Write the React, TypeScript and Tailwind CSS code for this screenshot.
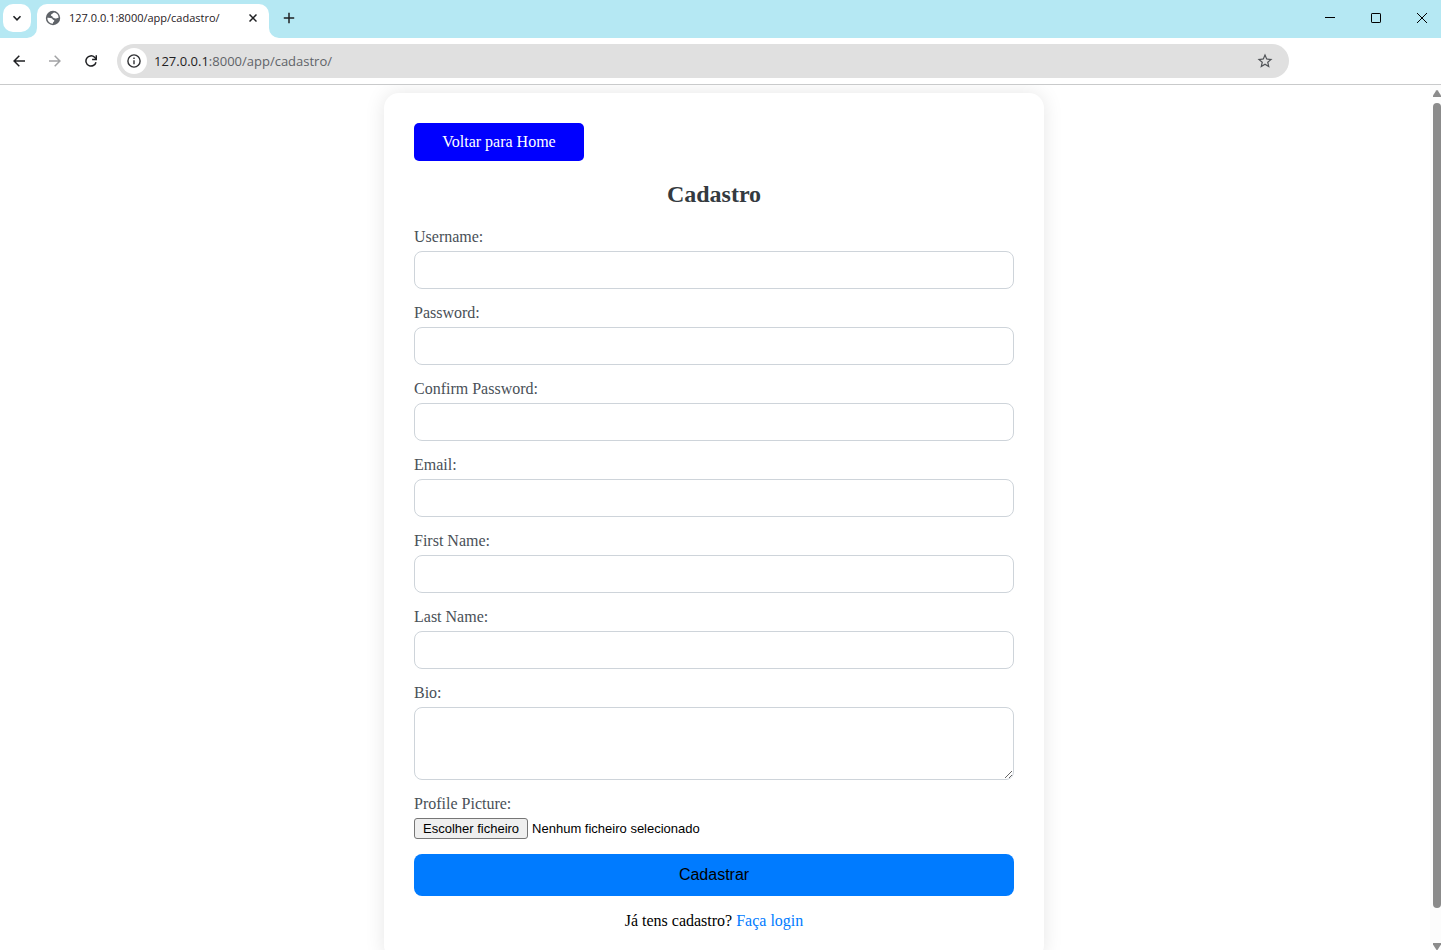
import { useRef, useState } from "react";
import { MdStarBorder } from "react-icons/md";

function TabFlare({ side }: { side: "left" | "right" }) {
  return (
    <svg
      aria-hidden="true"
      viewBox="0 0 10 10"
      className={
        side === "left"
          ? "absolute bottom-0 -left-2.5 h-2.5 w-2.5 text-white"
          : "absolute bottom-0 -right-2.5 h-2.5 w-2.5 text-white"
      }
      fill="currentColor"
    >
      {side === "left" ? <path d="M10 0v10H0A10 10 0 0 0 10 0Z" /> : <path d="M0 0v10h10A10 10 0 0 1 0 0Z" />}
    </svg>
  );
}

function GlobeIcon() {
  return (
    <svg aria-hidden="true" viewBox="0 0 16 16" className="size-4 shrink-0">
      <circle cx="8" cy="8" r="7.2" fill="#5f6368" />
      <path
        fill="#fff"
        d="M9.300 2.500c-1.300.2-1.500 1.400-2.700 1.700-.9.300-.9 1.500.1 1.700 1 .2.700 1.500 1.700 1.800 1 .3 1.200.9 2.300.9.900 0 1.200-.8 2.900-.8A5.700 5.700 0 0 0 9.300 2.500Z"
      />
      <path
        fill="#fff"
        d="M2.300 7.800c1.600-.2 3.200 0 4.300.5 1 .5 1 1.500 2.100 1.700.8.200.8 1.300.1 1.800-.8.500-.7.900-1 1.900A5.700 5.700 0 0 1 2.300 7.800Z"
      />
    </svg>
  );
}

function TabStrip() {
  return (
    <header className="flex h-[38px] shrink-0 items-end bg-[#b5e8f3]">
      <button
        type="button"
        aria-label="Search tabs"
        className="mb-1.5 ml-[3px] flex size-7 items-center justify-center rounded-[10px] bg-white text-[#1f2023]"
      >
        <svg viewBox="0 0 10 10" className="size-2.5" fill="none" stroke="currentColor" strokeWidth="1.6">
          <path d="M1.500 3.300 5 6.800l3.500-3.500" />
        </svg>
      </button>
      <div className="relative ml-1.5 flex h-[34px] w-[232px] items-center rounded-t-[10px] bg-white pr-2.5 pb-1.5 pl-2">
        <TabFlare side="left" />
        <GlobeIcon />
        <span className="ml-2 flex-1 text-[11px] leading-4 whitespace-nowrap text-[#1f2023]">
          127.0.0.1:8000/app/cadastro/
        </span>
        <button type="button" aria-label="Close tab" className="flex size-3 items-center justify-center text-[#1f2023]">
          <svg viewBox="0 0 8 8" className="size-2" stroke="currentColor" strokeWidth="1.5">
            <path d="m.5.5 7 7m0-7-7 7" />
          </svg>
        </button>
        <TabFlare side="right" />
      </div>
      <button
        type="button"
        aria-label="New tab"
        className="mb-1.5 ml-1.5 flex size-7 items-center justify-center text-[#1f2023]"
      >
        <svg viewBox="0 0 12 12" className="size-3" stroke="currentColor" strokeWidth="1.5">
          <path d="M6 .8v10.400M.8 6h10.400" />
        </svg>
      </button>
      <div className="ml-auto flex h-full items-center pb-0.5 text-black">
        <button type="button" aria-label="Minimize" className="flex w-[46px] justify-center">
          <svg viewBox="0 0 10 10" className="size-2.5" stroke="currentColor">
            <path d="M0 4.500h10" />
          </svg>
        </button>
        <button type="button" aria-label="Maximize" className="flex w-[46px] justify-center">
          <svg viewBox="0 0 10 10" className="size-2.5" fill="none" stroke="currentColor">
            <rect x=".5" y=".5" width="9" height="9" rx=".6" />
          </svg>
        </button>
        <button type="button" aria-label="Close" className="-mr-1 flex w-[46px] justify-center">
          <svg viewBox="0 0 10 10" className="size-2.5" stroke="currentColor">
            <path d="m0 0 10 10M10 0 0 10" />
          </svg>
        </button>
      </div>
    </header>
  );
}

function Toolbar() {
  return (
    <nav className="flex h-[47px] shrink-0 items-center border-b border-[#c9cacb] bg-white">
      <div className="flex w-[117px] shrink-0 pl-[3px]">
        <button type="button" aria-label="Back" className="flex w-8 justify-center text-[#1f2023]">
          <svg viewBox="0 0 12 12" className="size-3" fill="none" stroke="currentColor" strokeWidth="1.5">
            <path d="M12 6H1M6.300.8 1.100 6l5.200 5.200" />
          </svg>
        </button>
        <button type="button" aria-label="Forward" disabled className="ml-1 flex w-8 justify-center text-[#a2a3a5]">
          <svg viewBox="0 0 12 12" className="size-3" fill="none" stroke="currentColor" strokeWidth="1.5">
            <path d="M0 6h11M5.700.8 10.900 6l-5.200 5.200" />
          </svg>
        </button>
        <button type="button" aria-label="Reload" className="ml-1 flex w-8 justify-center text-[#1f2023]">
          <svg viewBox="0 0 12 12" className="size-3" fill="none" stroke="currentColor" strokeWidth="1.5">
            <path d="M11 7.200A5.100 5.100 0 1 1 9.600 2.300L11.200 4" />
            <path d="M11.300.2v4.200H7.100" />
          </svg>
        </button>
      </div>
      <div className="mr-[152px] flex h-[34px] flex-1 items-center rounded-full bg-[#e0e0e0] pr-[15px] pl-1">
        <button
          type="button"
          aria-label="Site information"
          className="flex size-[26px] shrink-0 items-center justify-center rounded-full bg-white text-[#303134]"
        >
          <svg viewBox="0 0 14 14" className="size-3.5" fill="none" stroke="currentColor" strokeWidth="1.4">
            <circle cx="7" cy="7" r="6.100" />
            <path d="M7 6.200v4M7 3.600v1.400" />
          </svg>
        </button>
        <div className="ml-[7px] flex-1 text-[13px] leading-5 text-[#5f6368]">
          <span className="text-[#1f2023]">127.0.0.1</span>:8000/app/cadastro/
        </div>
        <button type="button" aria-label="Bookmark this page" className="text-[#4f5256]">
          <MdStarBorder className="size-[18px]" />
        </button>
      </div>
    </nav>
  );
}

const fields = [
  { id: "username", label: "Username:", type: "text" },
  { id: "password", label: "Password:", type: "password" },
  { id: "confirm-password", label: "Confirm Password:", type: "password" },
  { id: "email", label: "Email:", type: "email" },
  { id: "first-name", label: "First Name:", type: "text" },
  { id: "last-name", label: "Last Name:", type: "text" },
];

const labelClass = "mb-[5px] block leading-[18px] text-[#495057]";
const boxClass = "block w-full rounded-lg border border-[#ced4da] bg-white px-2.5 outline-none focus:border-[#007bff]";

function SignupForm() {
  const fileInput = useRef<HTMLInputElement>(null);
  const [fileName, setFileName] = useState("");

  return (
    <section className="mx-auto mt-2 w-full max-w-[660px] rounded-[15px] bg-white p-[30px] text-[16px] shadow-[0_0_20px_rgba(0,0,0,0.1)]">
      <a
        href="/"
        className="flex h-[38px] w-[170px] items-center justify-center rounded-[5px] bg-[#0000ff] text-white"
      >
        Voltar para Home
      </a>
      <h2 className="my-5 text-center text-[24px] leading-[27px] font-bold text-[#343a40]">Cadastro</h2>
      <form onSubmit={(event) => event.preventDefault()}>
        {fields.map((field) => (
          <div key={field.id} className="mb-[15px]">
            <label htmlFor={field.id} className={labelClass}>
              {field.label}
            </label>
            <input id={field.id} type={field.type} className={`${boxClass} h-[38px]`} />
          </div>
        ))}
        <div className="mb-[15px]">
          <label htmlFor="bio" className={labelClass}>
            Bio:
          </label>
          <textarea id="bio" className={`${boxClass} h-[73px] resize py-2.5`} />
        </div>
        <div className="mb-[15px]">
          <label htmlFor="profile-picture" className={labelClass}>
            Profile Picture:
          </label>
          <div className="flex h-[21px] items-center gap-1 font-['Liberation_Sans',Arial,sans-serif] text-[13px] text-black">
            <input
              ref={fileInput}
              id="profile-picture"
              type="file"
              hidden
              onChange={(event) => setFileName(event.target.files?.[0]?.name ?? "")}
            />
            <button
              type="button"
              onClick={() => fileInput.current?.click()}
              className="h-[21px] rounded-[3px] border border-[#767676] bg-[#efefef] px-2 leading-[15px]"
            >
              Escolher ficheiro
            </button>
            <span>{fileName || "Nenhum ficheiro selecionado"}</span>
          </div>
        </div>
        <button
          type="submit"
          className="block h-[42px] w-full rounded-lg bg-[#007bff] font-['Liberation_Sans',Arial,sans-serif] text-[16px] text-black"
        >
          Cadastrar
        </button>
      </form>
      <p className="mt-4 text-center leading-[18px] text-black">
        Já tens cadastro?{" "}
        <a href="/login" className="text-[#007bff]">
          Faça login
        </a>
      </p>
    </section>
  );
}

function ScrollRail() {
  return (
    <div aria-hidden="true" className="flex w-[11px] shrink-0 flex-col items-end bg-[#fcfcfc] pt-[5px] text-[#8b8b8b]">
      <svg viewBox="0 0 8 7" className="h-[7px] w-2" fill="currentColor">
        <path d="M3.200.6Q4-.4 4.800.6L8 5.500V7H0V5.500Z" />
      </svg>
      <div className="mt-1.5 mb-[35px] w-2 flex-1 rounded-full bg-[#8b8b8b]" />
      <svg viewBox="0 0 8 7" className="h-[7px] w-2" fill="currentColor">
        <path d="M3.200 6.400Q4 7.400 4.800 6.400L8 1.500V0H0v1.500Z" />
      </svg>
    </div>
  );
}

export default function App() {
  return (
    <div className="flex h-screen flex-col overflow-hidden bg-white font-['Open_Sans','Noto_Sans',sans-serif]">
      <TabStrip />
      <Toolbar />
      <div className="flex min-h-0 flex-1 overflow-hidden">
        <main className="mr-0.5 min-w-0 flex-1 overflow-hidden font-['Liberation_Serif','Times_New_Roman',serif]">
          <SignupForm />
        </main>
        <ScrollRail />
      </div>
    </div>
  );
}
